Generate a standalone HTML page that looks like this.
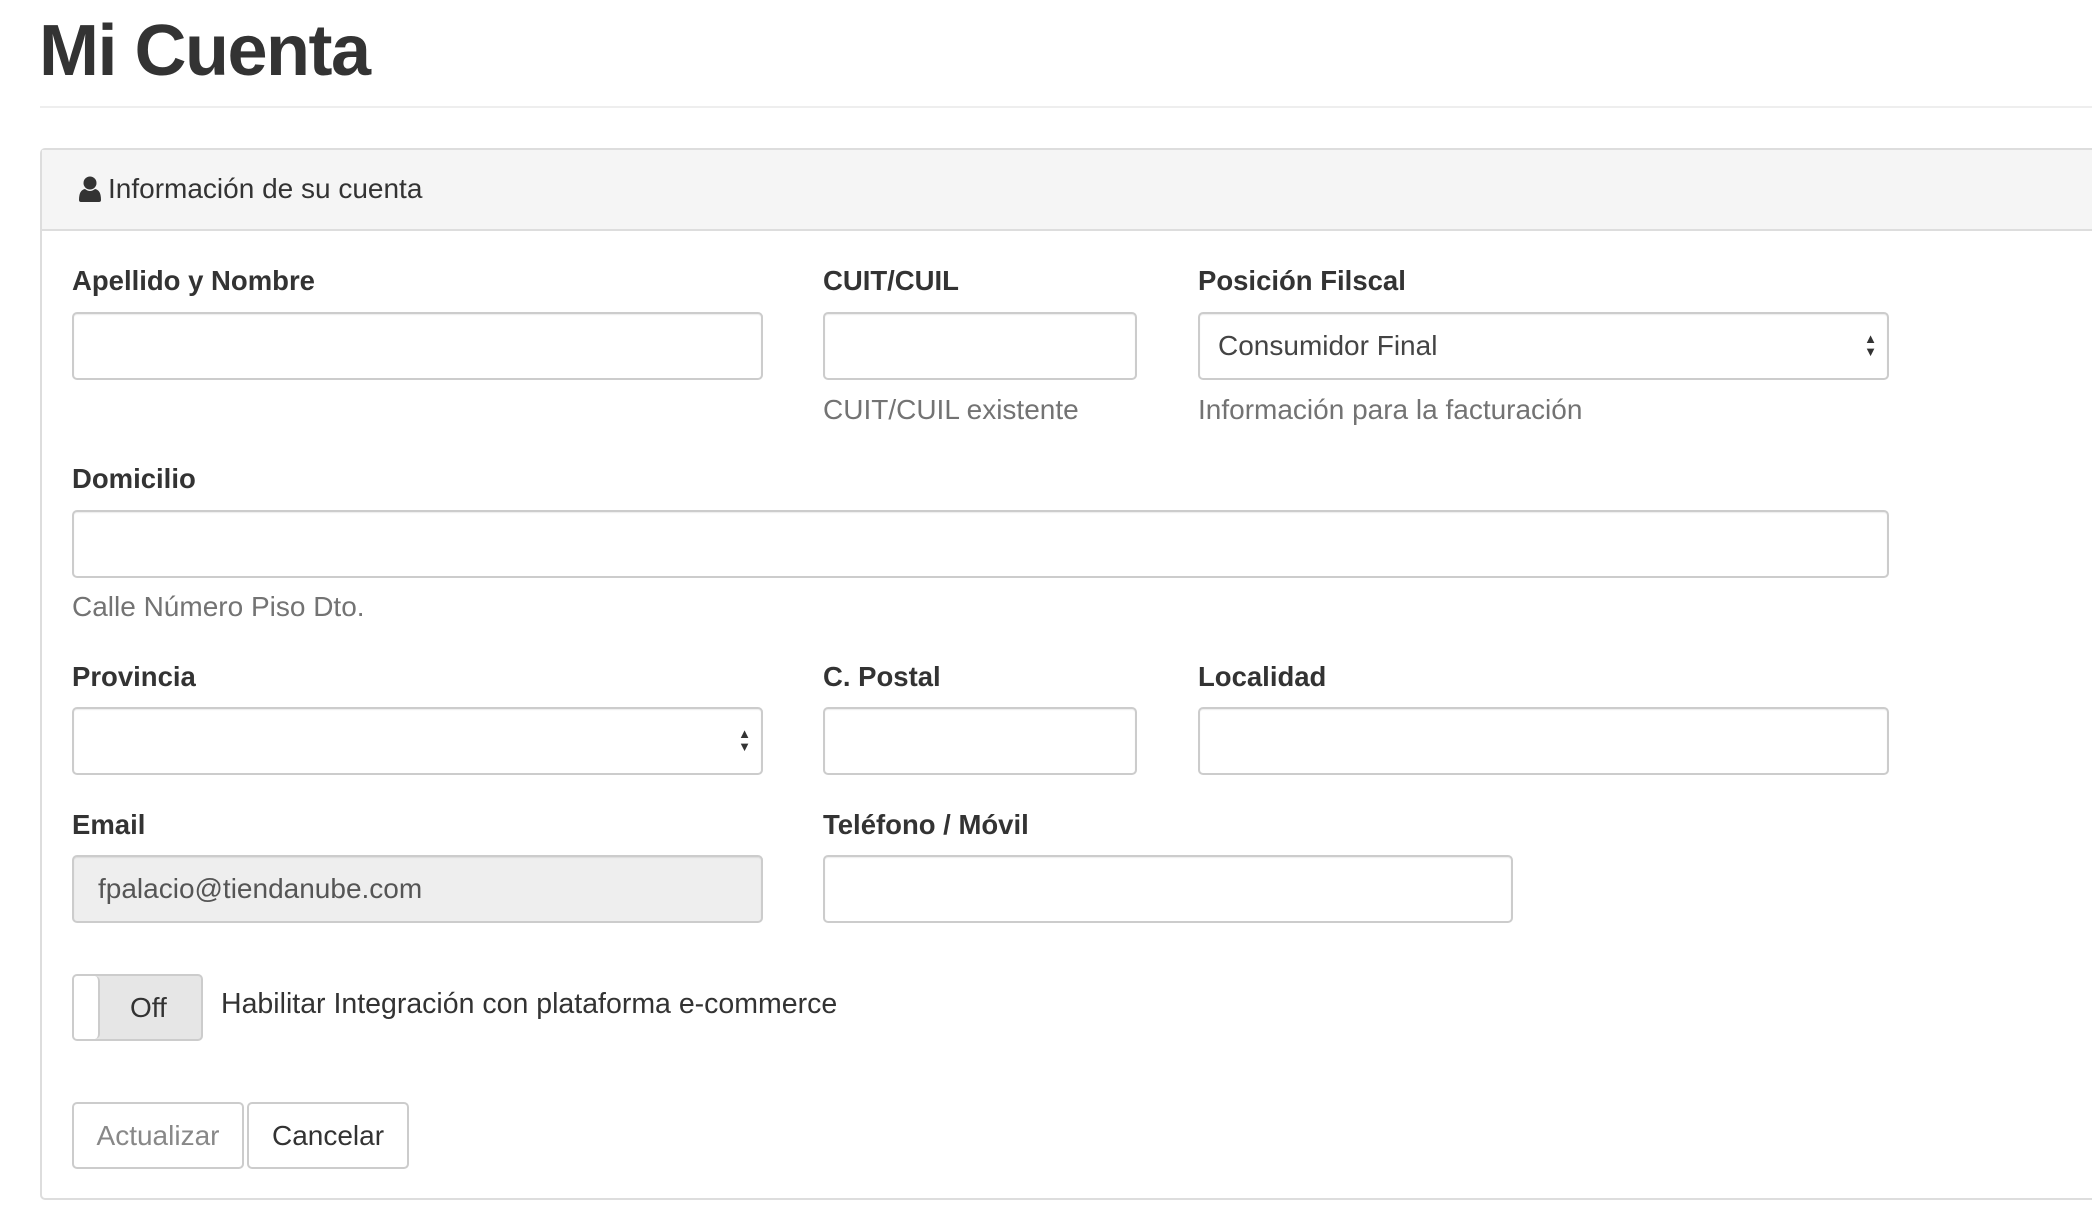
<!DOCTYPE html>
<html><head><meta charset="utf-8"><style>
*{box-sizing:border-box;margin:0;padding:0}
body{width:2092px;height:1216px;overflow:hidden;background:#fff;font-family:"Liberation Sans",Arial,sans-serif;color:#333;position:relative}
.a{position:absolute}
h1{position:absolute;left:39px;top:10px;font-size:72px;font-weight:bold;color:#333;letter-spacing:-1.5px}
.hr{left:40px;top:106px;width:2060px;height:2px;background:#eee}
.panel{left:40px;top:148px;width:2080px;height:1052px;border:2px solid #ddd;border-radius:5px}
.ph{left:42px;top:150px;width:2060px;height:81px;background:#f5f5f5;border-bottom:2px solid #ddd}
.pt{left:108px;top:173px;font-size:28px;color:#333}
.lbl{font-size:27.5px;font-weight:bold;color:#333}
.in{border:2px solid #ccc;border-radius:5px;height:68px;background:#fff;box-shadow:inset 0 1px 1px rgba(0,0,0,.075)}
.help{font-size:28px;color:#737373}
.val{font-size:28px;color:#555;line-height:64px;padding-left:16px}
.arr{position:absolute;right:10px;top:18px;font-size:13px;line-height:13px;color:#333}
.btn{border:2px solid #ccc;border-radius:5px;height:67px;font-size:28px;line-height:63px;text-align:center;background:#fff}
</style></head><body>
<h1>Mi Cuenta</h1>
<div class="a hr"></div>
<div class="a panel"></div>
<div class="a ph"></div>
<svg class="a" style="left:79px;top:176px" width="22" height="26" viewBox="0 0 22 26"><circle cx="11" cy="7" r="6.5" fill="#333"/><path d="M0 24 Q0 14 6 13 Q11 17 16 13 Q22 14 22 24 Q22 26 20 26 L2 26 Q0 26 0 24Z" fill="#333"/></svg>
<div class="a pt">Información de su cuenta</div>

<div class="a lbl" style="left:72px;top:265px">Apellido y Nombre</div>
<div class="a lbl" style="left:823px;top:265px">CUIT/CUIL</div>
<div class="a lbl" style="left:1198px;top:265px">Posición Filscal</div>
<div class="a in" style="left:72px;top:312px;width:691px"></div>
<div class="a in" style="left:823px;top:312px;width:314px"></div>
<div class="a in" style="left:1198px;top:312px;width:691px;background:#fff"><div class="val" style="color:#444;padding-left:18px">Consumidor Final</div><div class="arr">▲<br>▼</div></div>
<div class="a help" style="left:823px;top:394px">CUIT/CUIL existente</div>
<div class="a help" style="left:1198px;top:394px">Información para la facturación</div>

<div class="a lbl" style="left:72px;top:463px">Domicilio</div>
<div class="a in" style="left:72px;top:510px;width:1817px"></div>
<div class="a help" style="left:72px;top:591px">Calle Número Piso Dto.</div>

<div class="a lbl" style="left:72px;top:661px">Provincia</div>
<div class="a lbl" style="left:823px;top:661px">C. Postal</div>
<div class="a lbl" style="left:1198px;top:661px">Localidad</div>
<div class="a in" style="left:72px;top:707px;width:691px"><div class="arr">▲<br>▼</div></div>
<div class="a in" style="left:823px;top:707px;width:314px"></div>
<div class="a in" style="left:1198px;top:707px;width:691px"></div>

<div class="a lbl" style="left:72px;top:809px">Email</div>
<div class="a lbl" style="left:823px;top:809px">Teléfono / Móvil</div>
<div class="a in" style="left:72px;top:855px;width:691px;background:#eee"><div class="val" style="padding-left:24px">fpalacio@tiendanube.com</div></div>
<div class="a in" style="left:823px;top:855px;width:690px"></div>

<div class="a" style="left:72px;top:974px;width:131px;height:67px;border:2px solid #ccc;border-radius:5px;background:#e6e6e6;overflow:hidden">
<div class="a" style="left:0;top:0;width:26px;height:63px;background:#fff;border-right:2px solid #ccc;border-radius:0 5px 5px 0"></div>
<div class="a" style="left:56px;top:16px;font-size:28px;color:#333">Off</div></div>
<div class="a" style="left:221px;top:988px;font-size:28.5px;color:#333">Habilitar Integración con plataforma e-commerce</div>

<div class="a btn" style="left:72px;top:1102px;width:172px;color:#888">Actualizar</div>
<div class="a btn" style="left:247px;top:1102px;width:162px;color:#333">Cancelar</div>
</body></html>
